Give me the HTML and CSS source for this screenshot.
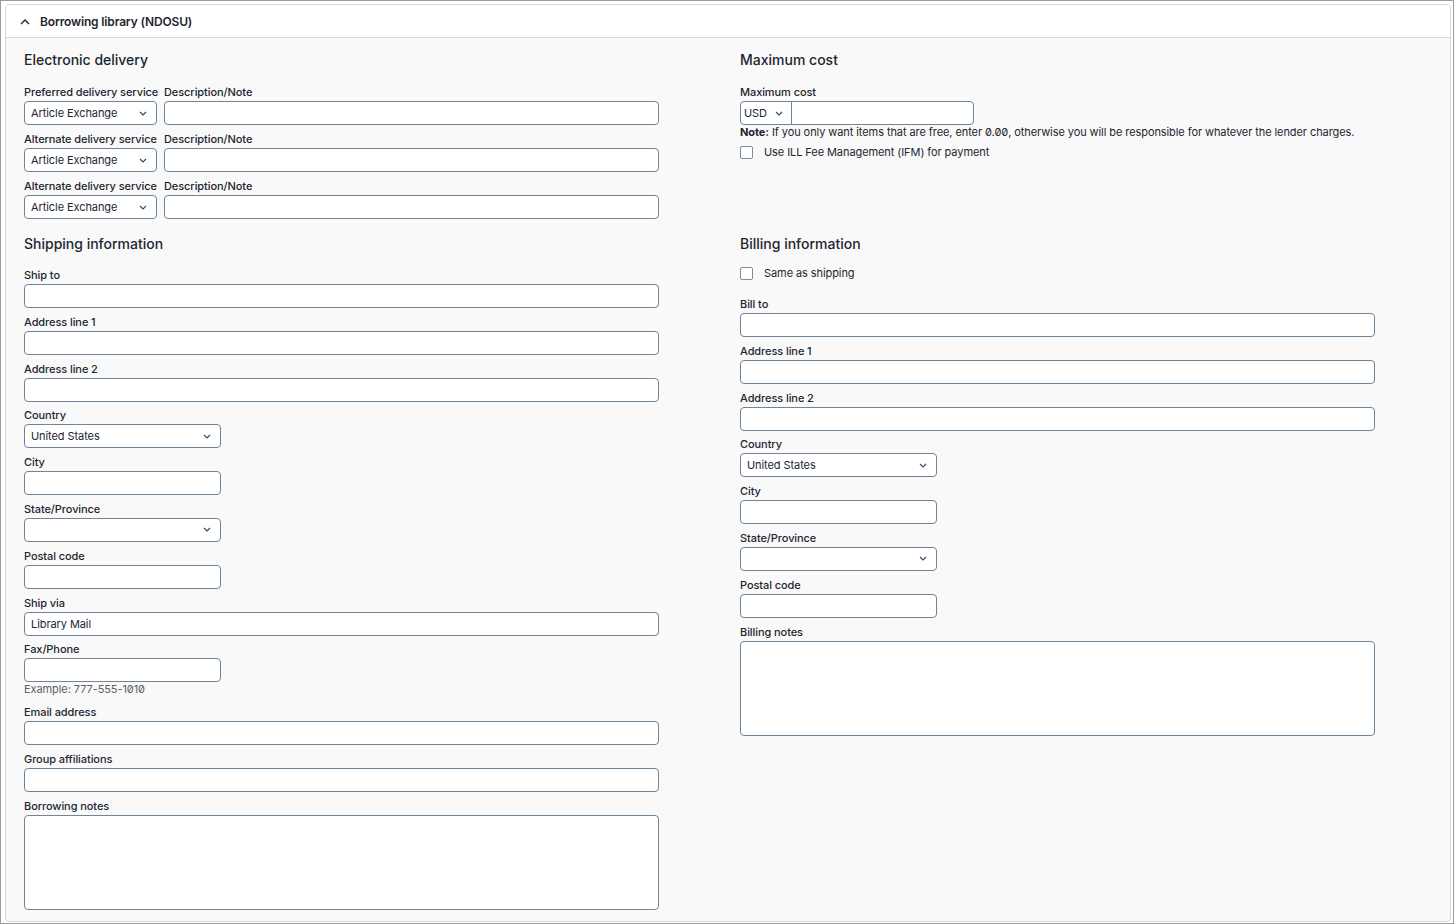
FILE: index.html
```html
<!DOCTYPE html>
<html lang="en">
<head>
    <meta charset="UTF-8">
    <meta name="viewport" content="width=device-width, initial-scale=1.0">
    <title>Borrowing library</title>
    <link rel="stylesheet" href="styles.css">
</head>
<body>

    <div class="frame">
        <div class="card">
            <div class="card-header">
                <svg class="chevron-up" width="10" height="6" viewBox="0 0 10 6"><path d="M1 5 L5 1 L9 5" fill="none" stroke="#1d2630" stroke-width="1.4"/></svg>
                <span>Borrowing library (NDOSU)</span>
            </div>

            <div class="card-body">
                <!-- Electronic delivery -->
                <section class="section">
                    <h2>Electronic delivery</h2>
                    <div class="delivery-row">
                        <div class="field service">
                            <label>Preferred delivery service</label>
                            <div class="select select-service"><span>Article Exchange</span><svg width="8" height="5" viewBox="0 0 8 5"><path d="M1 1 L4 4 L7 1" fill="none" stroke="#3b4652" stroke-width="1.1"/></svg></div>
                        </div>
                        <div class="field grow">
                            <label>Description/Note</label>
                            <div class="input"></div>
                        </div>
                    </div>
                    <div class="delivery-row">
                        <div class="field service">
                            <label>Alternate delivery service</label>
                            <div class="select select-service"><span>Article Exchange</span><svg width="8" height="5" viewBox="0 0 8 5"><path d="M1 1 L4 4 L7 1" fill="none" stroke="#3b4652" stroke-width="1.1"/></svg></div>
                        </div>
                        <div class="field grow">
                            <label>Description/Note</label>
                            <div class="input"></div>
                        </div>
                    </div>
                    <div class="delivery-row">
                        <div class="field service">
                            <label>Alternate delivery service</label>
                            <div class="select select-service"><span>Article Exchange</span><svg width="8" height="5" viewBox="0 0 8 5"><path d="M1 1 L4 4 L7 1" fill="none" stroke="#3b4652" stroke-width="1.1"/></svg></div>
                        </div>
                        <div class="field grow">
                            <label>Description/Note</label>
                            <div class="input"></div>
                        </div>
                    </div>
                </section>

                <!-- Maximum cost -->
                <section class="section">
                    <h2>Maximum cost</h2>
                    <div class="field cost-field">
                        <label>Maximum cost</label>
                        <div class="input-group">
                            <div class="currency"><span>USD</span><svg width="8" height="5" viewBox="0 0 8 5"><path d="M1 1 L4 4 L7 1" fill="none" stroke="#3b4652" stroke-width="1.1"/></svg></div>
                            <div class="amount"></div>
                        </div>
                        <p class="note"><b>Note:</b> If you only want items that are free, enter <span class="num">0.00</span>, otherwise you will be responsible for whatever the lender charges.</p>
                    </div>
                    <div class="check-row">
                        <span class="checkbox"></span>
                        <span>Use ILL Fee Management (IFM) for payment</span>
                    </div>
                </section>

                <!-- Shipping information -->
                <section class="section">
                    <h2 class="spaced">Shipping information</h2>
                    <div class="field"><label>Ship to</label><div class="input wide"></div></div>
                    <div class="field"><label>Address line 1</label><div class="input wide"></div></div>
                    <div class="field"><label>Address line 2</label><div class="input wide"></div></div>
                    <div class="field">
                        <label>Country</label>
                        <div class="select narrow"><span>United States</span><svg width="8" height="5" viewBox="0 0 8 5"><path d="M1 1 L4 4 L7 1" fill="none" stroke="#3b4652" stroke-width="1.1"/></svg></div>
                    </div>
                    <div class="field"><label>City</label><div class="input narrow"></div></div>
                    <div class="field">
                        <label>State/Province</label>
                        <div class="select narrow"><span></span><svg width="8" height="5" viewBox="0 0 8 5"><path d="M1 1 L4 4 L7 1" fill="none" stroke="#3b4652" stroke-width="1.1"/></svg></div>
                    </div>
                    <div class="field"><label>Postal code</label><div class="input narrow"></div></div>
                    <div class="field"><label>Ship via</label><div class="input wide">Library Mail</div></div>
                    <div class="field">
                        <label>Fax/Phone</label>
                        <div class="input narrow"></div>
                        <p class="help">Example: <span class="num">777-555-1010</span></p>
                    </div>
                    <div class="field"><label>Email address</label><div class="input wide"></div></div>
                    <div class="field"><label>Group affiliations</label><div class="input wide"></div></div>
                    <div class="field"><label>Borrowing notes</label><div class="textarea wide"></div></div>
                </section>

                <!-- Billing information -->
                <section class="section">
                    <h2 class="spaced billing-title">Billing information</h2>
                    <div class="check-row same-as">
                        <span class="checkbox"></span>
                        <span>Same as shipping</span>
                    </div>
                    <div class="field"><label>Bill to</label><div class="input wide"></div></div>
                    <div class="field"><label>Address line 1</label><div class="input wide"></div></div>
                    <div class="field"><label>Address line 2</label><div class="input wide"></div></div>
                    <div class="field">
                        <label>Country</label>
                        <div class="select narrow"><span>United States</span><svg width="8" height="5" viewBox="0 0 8 5"><path d="M1 1 L4 4 L7 1" fill="none" stroke="#3b4652" stroke-width="1.1"/></svg></div>
                    </div>
                    <div class="field"><label>City</label><div class="input narrow"></div></div>
                    <div class="field">
                        <label>State/Province</label>
                        <div class="select narrow"><span></span><svg width="8" height="5" viewBox="0 0 8 5"><path d="M1 1 L4 4 L7 1" fill="none" stroke="#3b4652" stroke-width="1.1"/></svg></div>
                    </div>
                    <div class="field"><label>Postal code</label><div class="input narrow"></div></div>
                    <div class="field"><label>Billing notes</label><div class="textarea wide"></div></div>
                </section>
            </div>
        </div>
    </div>

</body>
</html>
```

FILE: styles.css
```css
* {
    box-sizing: border-box;
}

body {
    margin: 0;
    font-family: Inter, "Noto Sans", sans-serif;
    color: #1d2630;
    background: #ffffff;
}

.frame {
    height: 924px;
    border: 1px solid #9b9b9b;
    padding: 3px 2px 1px 4px;
}

.card {
    height: 100%;
    border: 1px solid #d3d9e0;
    border-radius: 4px;
    background: #f9f9f9;
    overflow: hidden;
}

.card-header {
    height: 33px;
    display: flex;
    align-items: center;
    gap: 10px;
    padding-left: 14px;
    background: #ffffff;
    border-bottom: 1px solid #d3d9e0;
    font-size: 12px;
    font-weight: 600;
    letter-spacing: -0.15px;
}

.chevron-up {
    margin-top: 1px;
}

.card-body {
    display: grid;
    grid-template-columns: 716px 1fr;
    padding: 12px 18px 0;
    font-size: 11px;
    letter-spacing: -0.08px;
}

h2 {
    margin: 0 0 15px;
    font-size: 14px;
    font-weight: 500;
    line-height: 20px;
    letter-spacing: 0;
}

h2.spaced {
    margin-top: 8px;
    margin-bottom: 14px;
}

h2.billing-title {
    margin-bottom: 10px;
}

.delivery-row {
    display: flex;
    gap: 7px;
    width: 635px;
}

.field {
    margin-bottom: 6.8px;
}

.delivery-row .field {
    margin-bottom: 7px;
}

.field.service {
    flex: 0 0 133px;
    min-width: 0;
    white-space: nowrap;
}

.field.grow {
    flex: 1;
}

label {
    display: block;
    font-size: 11px;
    font-weight: 500;
    line-height: 14px;
    margin-bottom: 2px;
}

.input,
.select,
.textarea {
    height: 24px;
    border: 1px solid #6d8599;
    border-radius: 4px;
    background: #ffffff;
    font-size: 11px;
    line-height: 22px;
    padding: 0 6px;
}

.select {
    display: flex;
    align-items: center;
    justify-content: space-between;
    padding-right: 9px;
}

.select-service {
    width: 133px;
}

.wide {
    width: 635px;
}

.narrow {
    width: 197px;
}

.textarea {
    height: 95px;
}

.input-group {
    display: flex;
    width: 234px;
    height: 24px;
    border: 1px solid #6d8599;
    border-radius: 4px;
    background: #ffffff;
}

.currency {
    width: 51px;
    display: flex;
    align-items: center;
    gap: 8px;
    padding-left: 3px;
    border-right: 1px solid #6d8599;
}

.amount {
    flex: 1;
}

.cost-field {
    margin-bottom: 4px;
}

.note {
    margin: 0;
    line-height: 14px;
}

.num {
    font-variant-numeric: slashed-zero;
    font-feature-settings: "zero" 1;
}

.help {
    margin: 0;
    padding-bottom: 2px;
    line-height: 14px;
    color: #5b6168;
}

.check-row {
    display: flex;
    align-items: center;
    gap: 11px;
    line-height: 18px;
}

.same-as {
    margin-bottom: 15px;
}

.checkbox {
    width: 13px;
    height: 13px;
    border: 1.5px solid #7f8e9c;
    border-radius: 2px;
    background: #ffffff;
}
```
